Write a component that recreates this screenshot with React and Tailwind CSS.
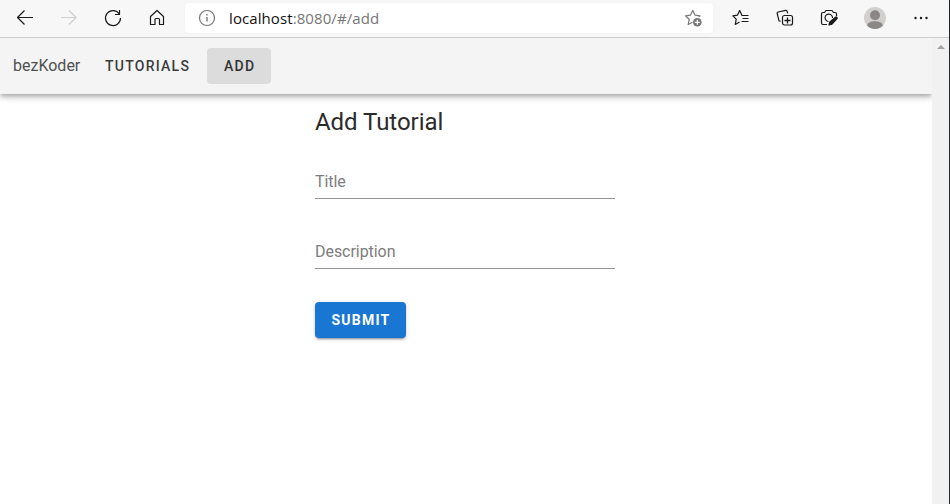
import React from "react";

function Icon({ children, className = "text-[#1a1a1a]" }) {
  return (
    <svg
      width="20"
      height="20"
      viewBox="0 0 20 20"
      fill="none"
      stroke="currentColor"
      strokeWidth="1.2"
      strokeLinejoin="round"
      className={`shrink-0 ${className}`}
    >
      {children}
    </svg>
  );
}

function BrowserBar() {
  return (
    <div className="flex h-[38px] shrink-0 items-start border-b border-[#cccccc] bg-[#f7f7f7]">
      <div className="flex w-[185px] gap-6 pt-2 pl-[15px]">
        <Icon>
          <path d="M18 9.500H2.500M9.500 2.500l-7 7 7 7" />
        </Icon>
        <Icon className="text-[#cfcfcf]">
          <path d="M2 9.500h15M10 2.500l7 7-7 7" />
        </Icon>
        <Icon>
          <path d="M16.300 6A7.500 7.500 0 1 0 17.500 10M16.500 2v4.500h-4.500" />
        </Icon>
        <Icon>
          <path d="M3.500 8.500 10 2.500l6.500 6v8h-4v-5c0-.7-.3-1-1-1h-2.500c-.7 0-1 .3-1 1v5h-4.500z" />
        </Icon>
      </div>

      <div className="mt-[3px] flex h-[30px] w-[528px] items-center rounded bg-white pr-[10px] pl-[12px] shadow-[0_0_2px_rgba(0,0,0,0.06)]">
        <Icon className="text-[#767676]">
          <circle cx="10" cy="10" r="7.500" />
          <path d="M10 9v4.500M10 6v1.500" strokeWidth="1.400" />
        </Icon>
        <div className="ml-3 flex-1 font-['Open_Sans','Noto_Sans',sans-serif] text-[15px] leading-5 tracking-[0.09px] text-[#767676]">
          <span className="text-[#111111]">localhost</span>:8080/#/add
        </div>
        <Icon className="text-[#767676]">
          <path d="M9.500 14.200 5.200 16.500 6.200 11.300 2.500 7.800 7.500 7.100 9.800 2.500 12 7.100l5 .7-1.200 1.200" />
          <circle cx="14.300" cy="14.300" r="4.300" fill="currentColor" stroke="none" />
          <path d="M14.300 11.800v5M11.800 14.300h5" stroke="white" />
        </Icon>
      </div>

      <div className="flex gap-6 pt-2 pl-[18px]">
        <Icon>
          <path d="M8.500 14 4.300 16.400 5.200 11.200 1.800 7.800 6.500 7.100 8.700 2.500 11 7.500h6.500M11.500 10.500h6M10.500 13.500h7" />
        </Icon>
        <Icon>
          <path d="M5.500 13.500 4 12.800 2.200 5.500c-.2-.8.2-1.300 1-1.500l7.300-1.700c.8-.2 1.300.2 1.600 1l.6 2" />
          <rect x="7.500" y="7.500" width="10" height="9.500" rx="2" />
          <path d="M12.500 9.500v6M9.500 12.500h6" strokeWidth="1.300" />
        </Icon>
        <Icon>
          <path d="M8 16.500H4c-1 0-1.500-.5-1.500-1.500V6c0-1 .5-1.500 1.500-1.500h1.500L7 2.500h6l1.500 2H16c1 0 1.500.5 1.500 1.500v2" />
          <path d="M9.500 13.500a3.700 3.700 0 1 1 4-3.500" />
          <path d="m10 17 .8-3 5.700-4.800c1-.7 2.200.5 1.500 1.500L13 16.200z" fill="currentColor" />
        </Icon>
      </div>

      <svg width="22" height="22" viewBox="0 0 22 22" className="mt-[7px] ml-[25px] shrink-0">
        <circle cx="11" cy="11" r="11" fill="#d2d0ce" />
        <circle cx="11" cy="8.300" r="5" fill="#8a8785" />
        <path d="M3 18.500c1-2.800 3.500-4.200 8-4.200s7 1.400 8 4.200A11 11 0 0 1 3 18.500Z" fill="#8a8785" />
      </svg>
      <Icon className="mt-2 ml-[25px] text-[#1a1a1a]">
        <g fill="currentColor" stroke="none">
          <circle cx="4.500" cy="10" r="1.200" />
          <circle cx="10" cy="10" r="1.200" />
          <circle cx="15.500" cy="10" r="1.200" />
        </g>
      </Icon>
    </div>
  );
}

function NavBar() {
  return (
    <nav className="flex h-14 shrink-0 items-center bg-[#f4f4f4] shadow-[0_2px_4px_-1px_rgba(0,0,0,0.2),0_4px_5px_0_rgba(0,0,0,0.14),0_1px_10px_0_rgba(0,0,0,0.12)]">
      <a className="ml-[13px] w-[77px] text-base leading-6 text-[#505050]">bezKoder</a>
      <a className="flex h-9 w-[117px] items-center pl-[15px] text-sm font-medium tracking-[1.25px] text-[#3c3c3c]">
        TUTORIALS
      </a>
      <a className="flex h-9 w-16 items-center rounded bg-[#dcdcdc] pl-[17px] text-sm font-medium tracking-[1.25px] text-[#333333]">
        ADD
      </a>
    </nav>
  );
}

function Field({ label }) {
  return (
    <input
      aria-label={label}
      placeholder={label}
      className="block h-8 w-full border-b border-[#949494] bg-transparent pb-0.5 text-base tracking-[-0.05px] outline-none placeholder:text-[#7d7d7d]"
    />
  );
}

export default function App() {
  return (
    <div className="flex h-[504px] w-[950px] overflow-hidden bg-white font-[Roboto,sans-serif]">
      <div className="flex w-[949px] flex-col">
        <BrowserBar />
        <div className="flex min-h-0 flex-1">
          <div className="flex w-[932px] flex-col overflow-hidden">
            <NavBar />
            <main className="ml-[315px] w-[300px] pt-3">
              <h1 className="text-2xl leading-8 font-normal tracking-[-0.05px] text-[#2b2b2b]">Add Tutorial</h1>
              <form className="pt-[29px]">
                <Field label="Title" />
                <div className="mt-[38px]">
                  <Field label="Description" />
                </div>
                <button
                  type="button"
                  className="mt-[33px] block h-9 w-[91px] rounded bg-[#1976d2] pl-px text-center text-sm font-bold tracking-[1.25px] text-white shadow-[0_3px_1px_-2px_rgba(0,0,0,0.2),0_2px_2px_0_rgba(0,0,0,0.14),0_1px_5px_0_rgba(0,0,0,0.12)]"
                >
                  SUBMIT
                </button>
              </form>
            </main>
          </div>
          <div className="flex w-[17px] justify-center bg-[#f1f1f1] pt-[7px]">
            <svg width="8" height="4" viewBox="0 0 8 4">
              <path d="M0 4 4 0l4 4z" fill="#a3a3a3" />
            </svg>
          </div>
        </div>
      </div>
      <div className="w-px bg-[#25262c]" />
    </div>
  );
}
